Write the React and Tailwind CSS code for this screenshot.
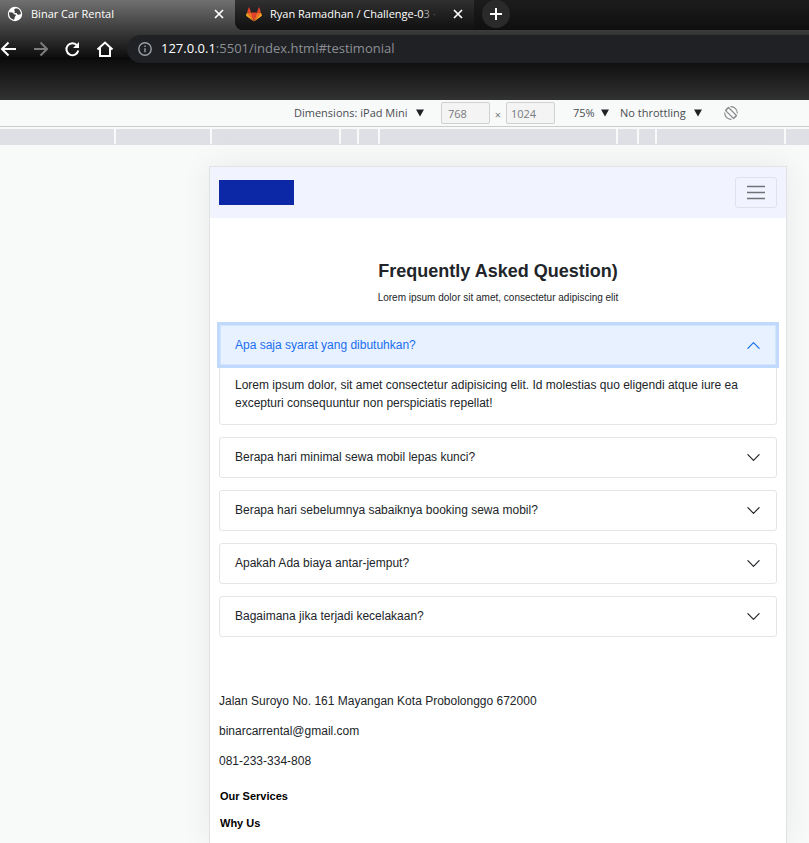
import { useState } from "react";

const rulerSegments = [
  "w-[114px]",
  "w-[94px]",
  "w-[127px]",
  "w-[16px]",
  "w-[19px]",
  "w-[236px]",
  "w-[19px]",
  "w-[16px]",
  "w-[127px]",
];

const questions = [
  {
    title: "Apa saja syarat yang dibutuhkan?",
    body: "Lorem ipsum dolor, sit amet consectetur adipisicing elit. Id molestias quo eligendi atque iure ea excepturi consequuntur non perspiciatis repellat!",
  },
  { title: "Berapa hari minimal sewa mobil lepas kunci?" },
  { title: "Berapa hari sebelumnya sabaiknya booking sewa mobil?" },
  { title: "Apakah Ada biaya antar-jemput?" },
  { title: "Bagaimana jika terjadi kecelakaan?" },
];

function CloseIcon() {
  return (
    <svg viewBox="0 0 10 10" className="size-[10px]" fill="none" stroke="currentColor" strokeWidth="1.7">
      <path d="M1 1l8 8M9 1l-8 8" />
    </svg>
  );
}

function GlobeIcon() {
  return (
    <svg viewBox="0 0 16 16" className="size-4 shrink-0">
      <circle cx="8" cy="8" r="7.2" fill="#fff" />
      <path
        d="M2.3 6.200 5.200 6.600c1 .2 1.200 1.400 2 1.700.9.3 1.800.2 1.600 1.200-.1.800-1 .9-1.100 1.700-.1.700-.2 1.600-.7 2.600C4 13.300 2 10.800 2 8c0-.7.100-1.300.3-1.800zM9 2.200c-.6.5-2 .9-2 1.700 0 .6 1 .6 1 1.200 0 .6-.9.800-.7 1.400.3.700 1.500.2 2.200.6.700.5.6 1.300 1.400 1.600.9.300 1.700-.5 2.900-.3.500-3.200-1.800-6-4.800-6.200z"
        fill="#454545"
      />
    </svg>
  );
}

function GitlabIcon() {
  return (
    <svg viewBox="0 0 16 15" className="h-[15px] w-4 shrink-0">
      <path d="M8 14.500 5.100 5.600h5.800z" fill="#e24329" />
      <path d="M8 14.500 5.100 5.600H1zM8 14.500l2.900-8.900H15z" fill="#fc6d26" />
      <path d="M1 5.600.100 8.300c-.1.300 0 .5.200.7L8 14.500zM15 5.600l.9 2.700c.100.3 0 .5-.2.7L8 14.500z" fill="#fca326" />
      <path d="M1 5.600h4.100L3.300.600c-.1-.3-.5-.3-.6 0zM15 5.600h-4.100l1.800-5c.100-.3.500-.3.600 0z" fill="#e24329" />
    </svg>
  );
}

function Chevron({ open }) {
  return (
    <svg
      viewBox="0 0 16 16"
      className={open ? "size-[15px] rotate-180 text-[#1a6ff0]" : "size-[15px] text-[#212529]"}
      fill="none"
      stroke="currentColor"
      strokeWidth="1.3"
      strokeLinecap="round"
      strokeLinejoin="round"
    >
      <path d="M2 5l6 6 6-6" />
    </svg>
  );
}

function ToolbarSelect({ label, value, width }) {
  return (
    <div className="flex items-center">
      <select aria-label={label} className={`${width} appearance-none bg-transparent text-[#4a4d51] outline-none`}>
        <option>{value}</option>
      </select>
      <svg viewBox="0 0 8 8" className="size-2" fill="#202124">
        <path d="M0 .5h8L4 7.500z" />
      </svg>
    </div>
  );
}

function BrowserChrome() {
  return (
    <header className="h-[100px] bg-[linear-gradient(#707070_0,#3c3c3c_30px,#0c0c0c_58px,#000_58px,#0c0c0c_59px,#323232_100px)] font-['Open_Sans','Noto_Sans',sans-serif] text-white">
      <div className="flex h-[30px] text-[11px]">
        <div className="flex w-[235px] shrink-0 items-center px-[7px] pb-[2px]">
          <GlobeIcon />
          <span className="ml-2 flex-1">Binar Car Rental</span>
          <button aria-label="Close Binar Car Rental" className="mr-1">
            <CloseIcon />
          </button>
        </div>
        <div className="flex flex-1 items-center rounded-bl-lg bg-gradient-to-b from-[#1c1c1c] to-[#0f0f0f]">
          <div className="flex h-full w-[239px] shrink-0 items-center rounded-bl-lg bg-gradient-to-b from-[#303030] to-[#101010] pr-[11px] pb-[2px] pl-[11px]">
            <GitlabIcon />
            <span className="ml-2 whitespace-nowrap">
              Ryan Ramadhan / Challenge-0<span className="text-[#a0a0a0]">3</span>
              <span className="text-[#5a5a5a]"> ·</span>
            </span>
            <button aria-label="Close Ryan Ramadhan" className="ml-auto">
              <CloseIcon />
            </button>
          </div>
          <button aria-label="New tab" className="mb-[2px] ml-2 grid size-7 place-items-center rounded-full bg-[#2a2a2a]">
            <svg viewBox="0 0 12 12" className="size-3" fill="none" stroke="#fff" strokeWidth="2">
              <path d="M6 0v12M0 6h12" />
            </svg>
          </button>
        </div>
      </div>
      <div className="flex items-center pt-[5px]">
        <nav aria-label="Browser" className="flex w-[127px] shrink-0 items-center gap-4">
          <button aria-label="Back">
            <svg viewBox="0 0 16 16" className="size-4" fill="none" stroke="#fff" strokeWidth="2">
              <path d="M16 8H3M8.500 1.500 2 8l6.500 6.500" />
            </svg>
          </button>
          <button aria-label="Forward">
            <svg viewBox="0 0 16 16" className="size-4" fill="none" stroke="#7c7c7c" strokeWidth="2">
              <path d="M2 8h13M8.500 1.500 15 8l-6.500 6.500" />
            </svg>
          </button>
          <button aria-label="Reload">
            <svg viewBox="0 0 16 16" className="size-4" fill="none" stroke="#fff" strokeWidth="2">
              <path d="M13.200 4.500A6 6 0 1 0 14.300 9.500" />
              <path d="M15 1v6H9z" fill="#fff" stroke="none" />
            </svg>
          </button>
          <button aria-label="Home">
            <svg viewBox="0 0 18 16" className="h-4 w-[18px]" fill="none" stroke="#fff" strokeWidth="2">
              <path d="M1.500 8.500 9 1.500l7.500 7M4 7v8h10V7" />
            </svg>
          </button>
        </nav>
        <div className="flex h-7 flex-1 items-center rounded-l-full bg-[#202124] pl-[11px]">
          <svg viewBox="0 0 14 14" className="size-[14px]" fill="none" stroke="#9aa0a6" strokeWidth="1.4">
            <circle cx="7" cy="7" r="6.200" />
            <path d="M7 6.200v4M7 3.500v1.500" />
          </svg>
          <span className="ml-[9px] text-[13px] text-[#8b8f94]">
            <span className="text-white">127.0.0.1</span>:5501/index.html#testimonial
          </span>
        </div>
      </div>
    </header>
  );
}

function DeviceToolbar() {
  return (
    <>
      <div className="flex h-[27px] items-center border-b border-[#c9cbcc] pl-[294px] font-['Open_Sans','Noto_Sans',sans-serif] text-[11px] text-[#4a4d51]">
        <ToolbarSelect label="Device" value="Dimensions: iPad Mini" width="w-[122px]" />
        <input
          aria-label="Width"
          defaultValue="768"
          className="ml-[17px] h-[22px] w-[49px] rounded-[2px] border border-[#cfd0d1] bg-[#f4f4f4] px-[6px] text-[#77797c]"
        />
        <span className="w-4 pt-1 text-center text-[#77797c]">×</span>
        <input
          aria-label="Height"
          defaultValue="1024"
          className="mr-[18px] h-[22px] w-[49px] rounded-[2px] border border-[#cfd0d1] bg-[#f4f4f4] px-1 text-[#77797c]"
        />
        <ToolbarSelect label="Zoom" value="75%" width="w-[28px]" />
        <div className="ml-[11px]">
          <ToolbarSelect label="Throttling" value="No throttling" width="w-[74px]" />
        </div>
        <button aria-label="Rotate" className="ml-[22px]">
          <svg viewBox="0 0 14 14" className="size-[14px]" fill="none" stroke="#85878a" strokeWidth="1.1">
            <path d="M4.500 1.500 12.500 9.500 9.500 12.500 1.500 4.500z" />
            <path d="M6.500.700A6.300 6.300 0 0 1 13.300 7.500M7.500 13.300A6.300 6.300 0 0 1 .700 6.500M1.500 4.500 4.500 1.500M9.500 12.500l3-3" />
          </svg>
        </button>
      </div>
      <div className="mt-[2px] flex h-4 gap-[2px] border-b border-[#dee0e5]">
        {rulerSegments.map((width, i) => (
          <div key={i} className={`${width} shrink-0 bg-[#dee0e5]`} />
        ))}
        <div className="flex-1 bg-[#dee0e5]" />
      </div>
    </>
  );
}

function Question({ id, title, body, open, onToggle }) {
  return (
    <div className="rounded-[3px] border border-[#e4e5e6] bg-white">
      <h3>
        <button
          aria-expanded={open}
          aria-controls={id}
          onClick={onToggle}
          className={
            open
              ? "relative flex h-10 w-full items-center justify-between bg-[#e7f1ff] px-[15px] text-left text-[#1a6ff0] shadow-[inset_0_0_0_1px_#d3e4fe] ring-[3px] ring-[#c0d9fd]"
              : "flex h-[39px] w-full items-center justify-between px-[15px] pb-px text-left"
          }
        >
          {title}
          <Chevron open={open} />
        </button>
      </h3>
      {open && (
        <p id={id} className="px-[15px] pt-[11px] pb-3 leading-[18px]">
          {body}
        </p>
      )}
    </div>
  );
}

export default function App() {
  const [active, setActive] = useState(0);

  return (
    <div className="flex min-h-screen flex-col overflow-hidden bg-[#f8faf9]">
      <BrowserChrome />
      <DeviceToolbar />
      <div className="mt-[21px] mr-[22px] ml-[209px] flex flex-1 flex-col border border-b-0 border-[#e0e2e3] bg-white font-['Liberation_Sans',Arial,sans-serif] text-xs text-[#212529] shadow-[0_0_30px_rgba(0,0,0,0.07)]">
        <nav aria-label="Main" className="flex h-[51px] items-center justify-between bg-[#f1f3ff] px-[9px]">
          <a href="#home" aria-label="Binar Car Rental" className="h-[25px] w-[75px] bg-[#0d28a6]" />
          <button aria-label="Toggle navigation" className="grid h-[31px] w-[42px] place-items-center rounded-[3px] border border-[#e0e1ee]">
            <svg viewBox="0 0 18 15" className="h-[15px] w-[18px]" stroke="#717278" strokeWidth="1.5">
              <path d="M0 1.500h18M0 7.500h18M0 13.500h18" />
            </svg>
          </button>
        </nav>
        <main className="px-[9px]">
          <h1 className="mt-[41px] text-center text-[18px] leading-6 font-bold">Frequently Asked Question)</h1>
          <p className="mt-[7px] text-center text-[10px] leading-4">Lorem ipsum dolor sit amet, consectetur adipiscing elit</p>
          <div className="mt-[18px] flex flex-col gap-3">
            {questions.map((q, i) => (
              <Question
                key={q.title}
                id={`answer-${i}`}
                title={q.title}
                body={q.body}
                open={active === i}
                onToggle={() => setActive(active === i ? -1 : i)}
              />
            ))}
          </div>
        </main>
        <footer className="px-[9px] pt-[55px]">
          <address className="flex flex-col gap-3 leading-[18px] not-italic">
            <p>Jalan Suroyo No. 161 Mayangan Kota Probolonggo 672000</p>
            <p>binarcarrental@gmail.com</p>
            <p>081-233-334-808</p>
          </address>
          <div className="mt-[18px] flex flex-col items-start gap-[11px] pl-px text-[11px] leading-4 font-bold text-black">
            <a href="#services">Our Services</a>
            <a href="#why-us">Why Us</a>
          </div>
        </footer>
      </div>
    </div>
  );
}
